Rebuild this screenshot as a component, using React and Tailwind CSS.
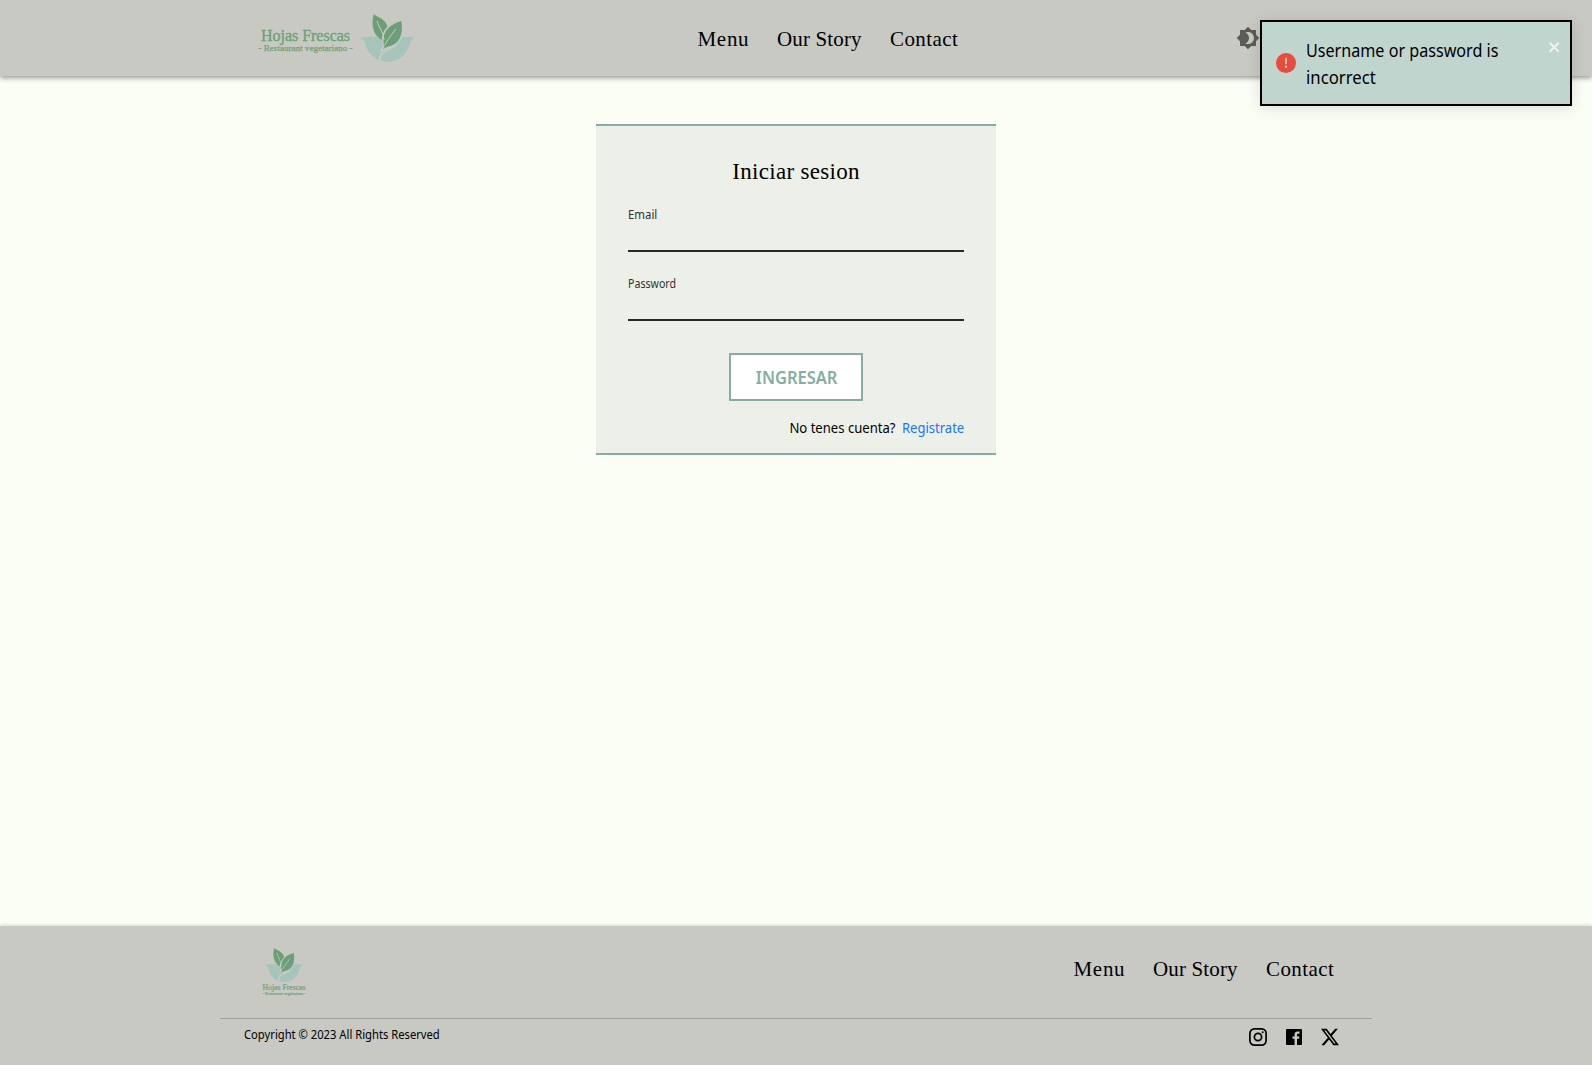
import React from "react";

const SERIF = "font-['Liberation_Serif',serif]";

function Mark({ className }) {
  return (
    <svg viewBox="0 0 51 48" className={className}>
      <path d="M0 23h51c0 2.500-.8 3.500-2.500 3.800C46 40 37.500 48 25.500 48S5 40 2.500 26.800C.8 26.500 0 25.500 0 23z" fill="#a7c4bb" />
      <path d="M18 48.500c-1-7.500 2-10 7-12.500s7-3 9-5" fill="none" stroke="#c9c9c3" strokeWidth="2" />
      <path d="M11.500 0C19 4 26 7 26 15.500c-3.500 3-5.500 6.500-6 11C12 22 8 13 11.500 0z" fill="#6c9f78" stroke="#c9c9c3" strokeWidth=".5" />
      <path d="M40 6c2.500 16-3 24.500-12.500 27-4 1.200-6 2.200-8.500 4 .8-2 1.500-3 2.500-4.500C18 18.500 26 10 40 6z" fill="#6c9f78" stroke="#c9c9c3" strokeWidth="1.400" />
      <path d="M15 7c2 7 6.500 11 7 19M34 15C28 22 24 29 20.500 34" fill="none" stroke="#c9c9c3" strokeWidth="1" />
    </svg>
  );
}

function Nav() {
  return (
    <nav className={`flex h-8 items-center text-[21px] leading-8 text-black ${SERIF}`}>
      <a className="w-[80px] pl-[0.5px] tracking-[0.7px]">Menu</a>
      <a className="w-[113px] tracking-[0.15px]">Our Story</a>
      <a className="w-[70px] tracking-[0.4px]">Contact</a>
    </nav>
  );
}

function Field({ label, fit }) {
  return (
    <label className="block h-[69px] text-[12px] leading-4 text-[#333331]">
      <span className={`block w-max origin-left ${fit}`}>{label}</span>
      <input className="block h-[29px] w-full border-b-2 border-[#292925] bg-transparent outline-none" />
    </label>
  );
}

export default function App() {
  return (
    <div className="flex h-[1065px] flex-col overflow-hidden bg-[#fafef4] font-['Noto_Sans',sans-serif] text-black">
      <header className="flex h-[76px] shrink-0 bg-[#c9c9c3] pl-[256px] shadow-[0_2px_5px_rgba(0,0,0,0.4)]">
        <svg className="mt-6 h-8 w-[100px] overflow-visible" viewBox="-2 0 100 32" fill="#6fa17b" fontFamily="Liberation Serif">
          <text x="3" y="16.800" fontSize="16" textLength="89" lengthAdjust="spacingAndGlyphs" stroke="#6fa17b" strokeWidth=".4">Hojas Frescas</text>
          <text x="0.500" y="26.500" fontSize="9" textLength="94" lengthAdjust="spacingAndGlyphs" stroke="#6fa17b" strokeWidth=".25">- Restaurant vegetariano -</text>
        </svg>
        <Mark className="ml-1.5 mt-[14px] h-12 w-[51px]" />
        <div className="ml-[284px] mt-[23px]"><Nav /></div>
        <svg viewBox="0 0 24 24" className="ml-[276px] mt-[26px] size-6 shrink-0" fill="#5b5c57">
          <path d="M20 8.690V4h-4.690L12 .69 8.690 4H4v4.690L.69 12 4 15.310V20h4.690L12 23.310 15.310 20H20v-4.690L23.310 12 20 8.690zM12 18c-.89 0-1.740-.2-2.500-.55C11.560 16.500 13 14.420 13 12s-1.440-4.500-3.500-5.450C10.260 6.200 11.110 6 12 6c3.310 0 6 2.690 6 6s-2.690 6-6 6z" />
        </svg>
      </header>

      <main className="flex flex-1 justify-center pt-12">
        <section className="h-[331px] w-[400px] border-y-2 border-[#85ada1] bg-[#edf0e9] px-8 pt-[30px]">
          <h1 className={`text-center text-[23px] leading-8 tracking-[0.3px] ${SERIF}`}>Iniciar sesion</h1>
          <div className="mt-[19px]">
            <Field label="Email" fit="scale-x-[0.95]" />
            <Field label="Password" fit="scale-x-[0.885]" />
          </div>
          <button className="mx-auto mt-[8px] flex h-12 w-[134px] items-center justify-center border-2 border-[#85ada1] bg-white pl-px text-[18px] font-semibold text-[#85ada1]">
            <span className="scale-x-[0.915]">INGRESAR</span>
          </button>
          <p className="mt-[17px] flex justify-end text-[14px] leading-5">
            <span className="origin-right scale-x-[0.935]">No tenes cuenta?</span>
            <a className="ml-[7px] w-[62px] text-[#1a73ff]"><span className="block w-max origin-left scale-x-[0.93]">Registrate</span></a>
          </p>
        </section>
      </main>

      <footer className="h-[139px] shrink-0 bg-[#c9c9c3] px-[220px] shadow-[0_-1px_3px_rgba(0,0,0,0.15)]">
        <div className="flex h-[93px] justify-between border-b border-[#9d9d99] pl-[41px] pr-[36px]">
          <div className="pt-[22px]">
            <Mark className="ml-[5px] h-[34px] w-9" />
            <svg className="-mt-px h-[18px] w-[46px] overflow-visible" viewBox="-1 0 46 18" fill="#6fa17b" fontFamily="Liberation Serif">
              <text x=".5" y="9.300" fontSize="7.800" textLength="43" lengthAdjust="spacingAndGlyphs" stroke="#6fa17b" strokeWidth=".2">Hojas Frescas</text>
              <text x=".5" y="14" fontSize="4" textLength="43" lengthAdjust="spacingAndGlyphs" stroke="#6fa17b" strokeWidth=".15">- Restaurant vegetariano -</text>
            </svg>
          </div>
          <div className="mt-[27px]"><Nav /></div>
        </div>
        <div className="flex justify-between pl-6 pr-[33px] pt-[9px] text-[12px] leading-4">
          <span className="-mt-px h-4 origin-left scale-x-[0.934]">Copyright © 2023 All Rights Reserved</span>
          <div className="flex items-start">
            <svg viewBox="0 0 18 18" className="size-[18px]" fill="none" stroke="#000" strokeWidth="1.700">
              <rect x=".9" y=".9" width="16.200" height="16.200" rx="4.500" />
              <circle cx="9" cy="9" r="3.600" />
              <circle cx="13.700" cy="4.300" r="1" fill="#000" stroke="none" />
            </svg>
            <svg viewBox="3 3 18 18" className="ml-[19px] mt-px size-4">
              <path d="M20 3H4a1 1 0 0 0-1 1v16a1 1 0 0 0 1 1h8.615v-6.960h-2.338v-2.725h2.338v-2c0-2.325 1.420-3.592 3.500-3.592.699-.002 1.399.034 2.095.107v2.420h-1.435c-1.128 0-1.348.538-1.348 1.325v1.735h2.697l-.35 2.725h-2.348V21H20a1 1 0 0 0 1-1V4a1 1 0 0 0-1-1z" />
            </svg>
            <svg viewBox="0 0 16 16" className="ml-[19px] size-[18px]">
              <path d="M12.600.75h2.454l-5.360 6.142L16 15.250h-4.937l-3.867-5.070-4.425 5.070H.316l5.733-6.570L0 .75h5.063l3.495 4.633L12.601.75Zm-.86 13.028h1.360L4.323 2.145H2.865z" />
            </svg>
          </div>
        </div>
      </footer>

      <div className="absolute left-[1260px] top-5 flex h-[86px] w-[312px] border-2 border-black bg-[#c1d5cf] shadow-[0_2px_15px_rgba(0,0,0,0.12)]">
        <svg viewBox="0 0 24 24" className="ml-[14px] mt-[31px] size-5 shrink-0" fill="#e74c3c">
          <path d="M11.983 0a12.206 12.206 0 00-8.510 3.653A11.800 11.800 0 000 12.207 11.779 11.779 0 0011.800 24h.214A12.111 12.111 0 0024 11.791 11.766 11.766 0 0011.983 0zM10.500 16.542a1.476 1.476 0 011.449-1.530h.027a1.527 1.527 0 011.523 1.470 1.475 1.475 0 01-1.449 1.530h-.027a1.529 1.529 0 01-1.523-1.470zM11 12.500v-6a1 1 0 012 0v6a1 1 0 11-2 0z" />
        </svg>
        <p className="ml-[10px] mt-[15px] w-[242px] shrink-0 text-[18px] leading-[27px]">
          <span className="block w-max origin-left scale-x-[0.896]">Username or password is</span>
          <span className="block w-max origin-left scale-x-[0.93]">incorrect</span>
        </p>
        <svg viewBox="0 0 14 16" className="mt-[17px] h-4 w-[14px] shrink-0" fill="#fff" opacity=".7">
          <path fillRule="evenodd" d="M7.710 8.230l3.750 3.750-1.480 1.480-3.750-3.750-3.750 3.750L1 11.980l3.750-3.750L1 4.480 2.480 3l3.750 3.750L9.980 3l1.480 1.480-3.750 3.750z" />
        </svg>
      </div>
    </div>
  );
}
